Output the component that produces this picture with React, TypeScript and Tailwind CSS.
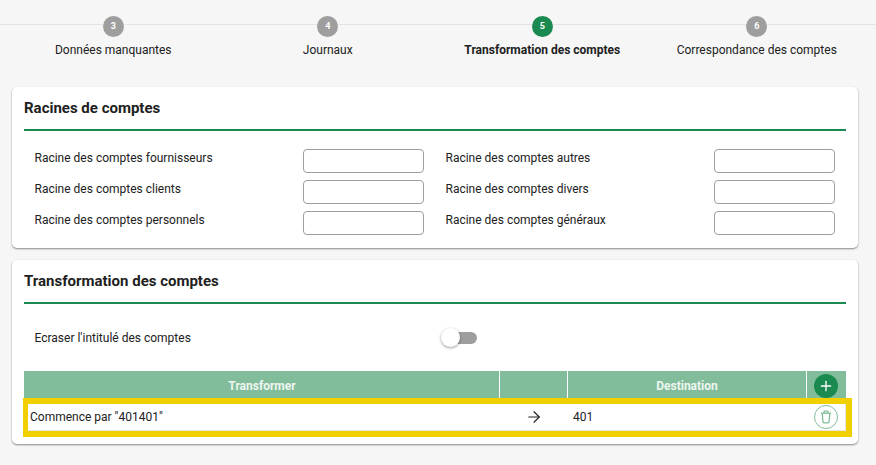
import React from "react";
import { ArrowRight, Plus } from "lucide-react";

const steps = [
  { n: 3, label: "Données manquantes" },
  { n: 4, label: "Journaux" },
  { n: 5, label: "Transformation des comptes", active: true },
  { n: 6, label: "Correspondance des comptes" },
];

const leftRoots = ["Racine des comptes fournisseurs", "Racine des comptes clients", "Racine des comptes personnels"];
const rightRoots = ["Racine des comptes autres", "Racine des comptes divers", "Racine des comptes généraux"];

const CardTitle = ({ title }: { title: string }) => (
  <div className="h-[44px] mx-3 border-b-2 border-[#1b8a50] flex items-center font-bold text-[15px] text-[#212121]">
    {title}
  </div>
);

const RootColumn = ({ labels }: { labels: string[] }) => (
  <div className="flex flex-col gap-[7px] w-[390px]">
    {labels.map((label) => (
      <div key={label} className="flex items-start justify-between h-[24px]">
        <span className="pl-[0.5px] text-xs leading-[18px] text-[#212121]">{label}</span>
        <div className="w-[121px] h-[24px] bg-white border border-[#9e9e9e] rounded-[4px]" />
      </div>
    ))}
  </div>
);

const TrashIcon = () => (
  <svg width="12" height="14" viewBox="0 0 12 14" fill="none" stroke="#81bd9a" strokeWidth="1.3" strokeLinejoin="round">
    <path d="M1 3.2h10" />
    <path d="M4 3V2a.8.8 0 0 1 .8-.8h2.4A.8.8 0 0 1 8 2v1" />
    <path d="M2.2 3.4l.8 8.6a.9.9 0 0 0 .9.8h4.2a.9.9 0 0 0 .9-.8l.8-8.6" />
  </svg>
);

export default function App() {
  return (
    <div className="w-[876px] h-[465px] overflow-hidden bg-[#f6f6f6] font-['Roboto',sans-serif]">
      {/* stepper */}
      <div className="relative h-[87px] pt-[16px]">
        <div className="absolute left-0 right-0 top-[24px] h-px bg-[#e4e4e4]" />
        <div className="relative grid grid-cols-4 w-[858px] ml-[6px]">
          {steps.map((s) => (
            <div key={s.n} className="flex flex-col items-center">
              <div
                className={`w-[21px] h-[21px] rounded-full flex items-center justify-center text-[9px] font-bold text-white ${
                  s.active ? "bg-[#1b8a50]" : "bg-[#9e9e9e]"
                }`}
              >
                {s.n}
              </div>
              <div className={`mt-[4px] text-xs leading-[18px] text-[#212121] ${s.active ? "font-bold" : ""}`}>
                {s.label}
              </div>
            </div>
          ))}
        </div>
      </div>

      {/* racines */}
      <div className="ml-3 w-[846px] h-[161px] bg-white rounded-[5px] shadow-[0_1px_2px_rgba(0,0,0,0.45)]">
        <CardTitle title="Racines de comptes" />
        <div className="flex pl-[22px] pt-[18px] gap-[21px]">
          <RootColumn labels={leftRoots} />
          <RootColumn labels={rightRoots} />
        </div>
      </div>

      {/* transformation */}
      <div className="ml-3 mt-3 w-[846px] h-[184px] bg-white rounded-[5px] shadow-[0_1px_2px_rgba(0,0,0,0.45)]">
        <CardTitle title="Transformation des comptes" />
        <div className="flex items-center h-[67px] pl-[22px]">
          <span className="w-[413px] pl-[0.5px] text-xs text-[#212121]">Ecraser l'intitulé des comptes</span>
          <div className="relative w-[30px] h-[12px] rounded-full bg-[#9e9e9e]">
            <div className="absolute left-[-6px] top-[-4px] w-[19px] h-[19px] rounded-full bg-white shadow-[0_1px_3px_rgba(0,0,0,0.4)]" />
          </div>
        </div>
        <div className="mx-3">
          <div className="grid grid-cols-[476px_68px_239px_39px] h-[33px] bg-[#81bd9a] text-xs font-bold text-[#eef6f1]">
            <div className="flex items-center justify-center border-r border-white pb-[3px] pl-[1px]">Transformer</div>
            <div className="border-r border-white" />
            <div className="flex items-center justify-center border-r border-white pb-[3px]">Destination</div>
            <div className="flex items-start justify-center pt-[3px] pr-[1px]">
              <div className="w-[24px] h-[24px] rounded-full bg-[#1b8a50] flex items-center justify-center">
                <Plus size={16} strokeWidth={2} className="text-white" />
              </div>
            </div>
          </div>
          <div className="relative grid grid-cols-[476px_68px_239px_39px] h-[27px] items-center text-xs text-[#212121] border-b border-r border-[#e4e4e4]">
            <div className="pl-[6px]">Commence par "401401"</div>
            <div className="flex justify-center">
              <ArrowRight size={18} strokeWidth={1.5} className="text-[#212121]" />
            </div>
            <div className="pl-[5px]">401</div>
            <div className="flex justify-center pr-[1px]">
              <div className="w-[24px] h-[24px] rounded-full border border-[#81bd9a] flex items-center justify-center">
                <TrashIcon />
              </div>
            </div>
            {/* surlignage */}
            <div className="absolute left-[-1px] top-[-6px] w-[829px] h-[39px] border-l-[5px] border-r-[6px] border-y-[6px] border-[#f2d000]" />
          </div>
        </div>
      </div>
    </div>
  );
}
